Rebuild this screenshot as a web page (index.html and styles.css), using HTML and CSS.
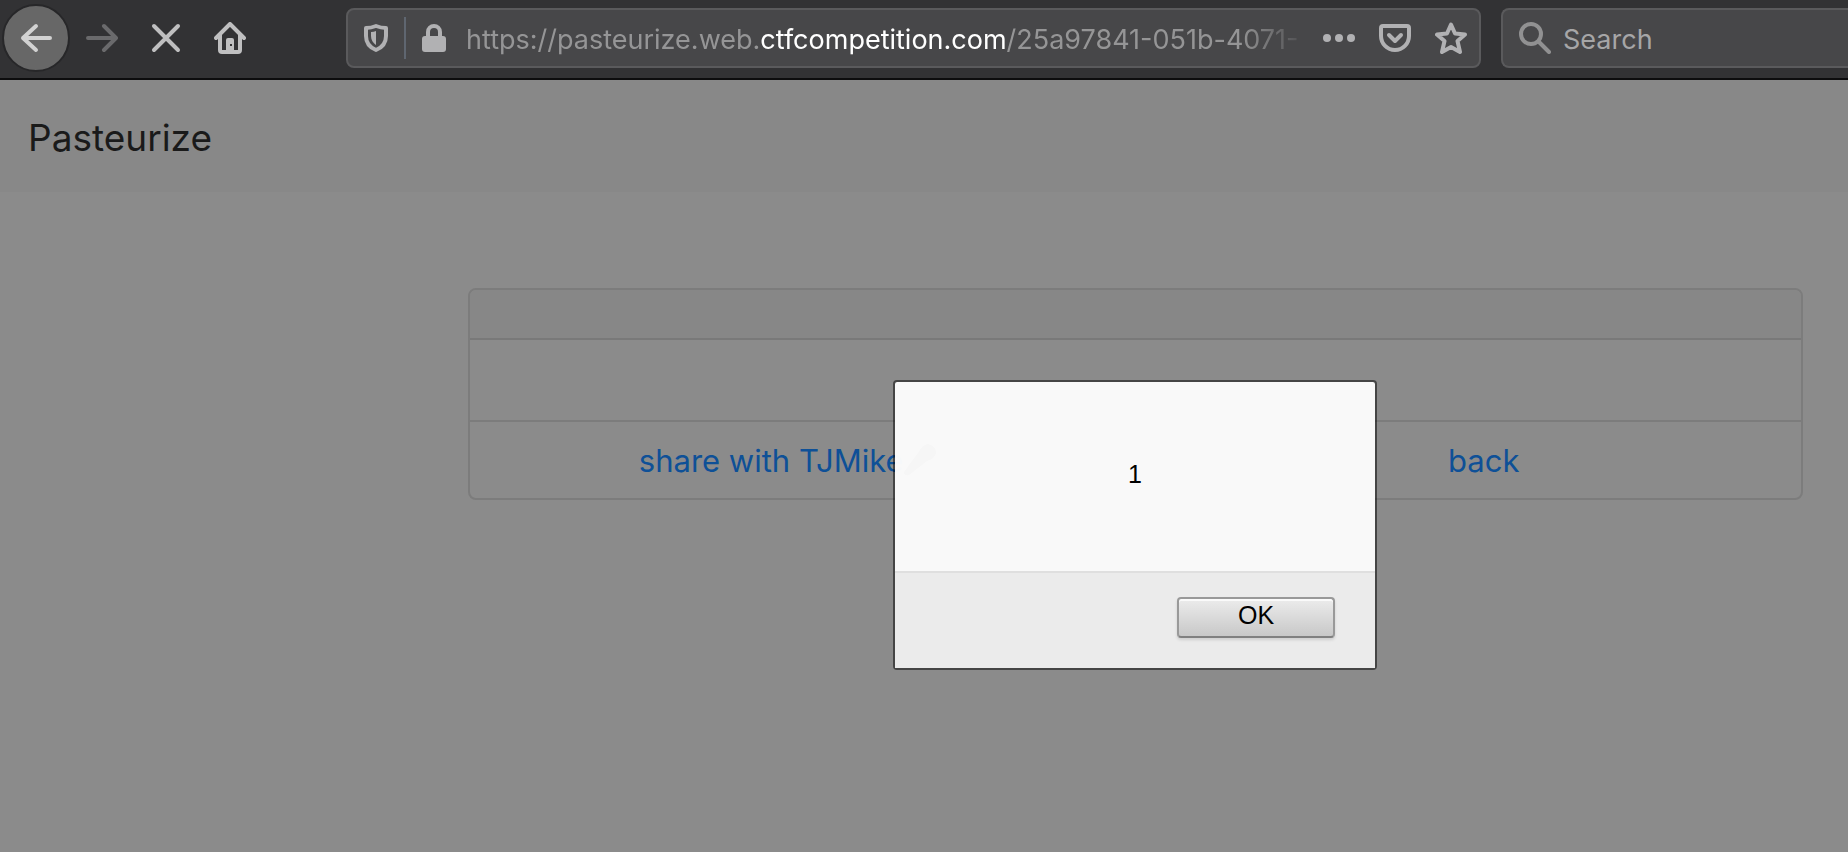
FILE: index.html
```html
<!DOCTYPE html>
<html lang="en">
<head>
<meta charset="utf-8">
<title>Pasteurize</title>
<link rel="stylesheet" href="styles.css">
</head>
<body>
<header class="toolbar">
  <div class="nav-buttons">
    <button class="nav-button nav-back" aria-label="Back"><svg class="icon" viewBox="0 0 32 32"><path d="M30 16H3M16 4L3 16l13 12"/></svg></button>
    <button class="nav-button nav-forward" aria-label="Forward"><svg class="icon" viewBox="0 0 32 32"><path d="M2 16h27M18 4l12 12-12 12"/></svg></button>
    <button class="nav-button" aria-label="Stop"><svg class="icon" viewBox="0 0 32 32"><path d="M4 4l24 24M28 4L4 28"/></svg></button>
    <button class="nav-button" aria-label="Home"><svg class="icon" viewBox="0 0 32 32"><path d="M2 16L16 2l14 14M6 13v15q0 2 2 2h16q2 0 2-2V13"/><path class="solid" fill-rule="evenodd" d="M12 29V18q0-2 2-2h4q2 0 2 2v11zM16 22v2h2v-2z"/></svg></button>
  </div>
  <div class="urlbar">
    <button class="field-button" aria-label="Tracking protection"><svg class="icon" viewBox="0 0 32 32"><path d="M16 4q-5 2-10 2v8c0 8 5 12 10 14 5-2 10-6 10-14V6q-5 0-10-2z"/><path class="solid" d="M16 9v14c-3-2-5-5-5-9v-4q3 0 5-1z"/></svg></button>
    <span class="separator"></span>
    <button class="field-button" aria-label="Connection security"><svg class="icon" viewBox="0 0 32 32"><rect class="solid" x="4" y="14" width="24" height="16" rx="3"/><path d="M10 16v-6a6 6 0 0 1 12 0v6"/></svg></button>
    <div class="address" role="textbox" contenteditable="true" spellcheck="false" aria-label="Address">https://pasteurize.web.<span class="domain">ctfcompetition.com</span>/25a97841-051b-4071-</div>
    <div class="page-actions">
      <button class="field-button" aria-label="Page actions"><svg class="icon" viewBox="0 0 32 32"><g class="solid"><circle cx="4" cy="16" r="4"/><circle cx="16" cy="16" r="4"/><circle cx="28" cy="16" r="4"/></g></svg></button>
      <button class="field-button" aria-label="Save to Pocket"><svg class="icon" viewBox="0 0 32 32"><path d="M4 4h24q2 0 2 2v8a14 14 0 0 1-28 0V6q0-2 2-2zM10 13l6 6 6-6"/></svg></button>
      <button class="field-button" aria-label="Bookmark this page"><svg class="icon" viewBox="0 0 32 32"><path d="M16 2.500l4 9 10 1-7.500 6.500 2.500 11-9-5-9 5 2.500-11L2 12.500l10-1z"/></svg></button>
    </div>
  </div>
  <label class="search">
    <svg class="icon" viewBox="0 0 32 32"><circle cx="12" cy="12" r="10"/><path d="M20 20l10 10"/></svg>
    <input class="search-input" type="text" placeholder="Search" aria-label="Search">
  </label>
</header>
<nav class="navbar"><a class="brand" href="#">Pasteurize</a></nav>
<main class="page">
  <section class="note">
    <div class="note-title"></div>
    <div class="note-body"></div>
    <div class="note-actions">
      <div class="action"><a class="link" href="#">share with TJMike<svg class="mic" viewBox="0 0 32 32" aria-hidden="true"><path d="M0 28L14 9Q18 1 24 0q8 2 8 9-1 5-9 8L5 31q-5 1-5-3z"/></svg></a></div>
      <div class="action action-back"><a class="link" href="#">back</a></div>
    </div>
  </section>
  <dialog class="alert" open aria-labelledby="alert-message">
    <p class="alert-message" id="alert-message">1</p>
    <div class="alert-footer"><button class="alert-ok">OK</button></div>
  </dialog>
</main>
</body>
</html>
```
FILE: styles.css
```css
* { box-sizing: border-box; }

body {
  margin: 0;
  min-height: 100vh;
  background: #8b8b8b;
  font-family: Inter, "Liberation Sans", sans-serif;
}

button {
  padding: 0;
  border: 0;
  background: none;
  color: inherit;
  font: inherit;
}

a { text-decoration: none; }

.icon {
  display: block;
  flex: none;
  width: 32px;
  height: 32px;
  fill: none;
  stroke: currentColor;
  stroke-width: 4;
  stroke-linecap: round;
  stroke-linejoin: round;
}

.icon .solid { fill: currentColor; stroke: none; }

/* Browser toolbar */
.toolbar {
  display: flex;
  align-items: center;
  height: 80px;
  padding: 0 0 2px 2px;
  border-bottom: 2px solid #0c0c0d;
  background: #323234;
  color: #bfbfc0;
}

.nav-buttons {
  display: flex;
  align-items: center;
  flex: none;
  width: 344px;
}

.nav-button {
  display: grid;
  place-items: center;
  width: 64px;
  height: 68px;
}

.nav-back {
  width: 68px;
  border: 2px solid #272729;
  border-radius: 50%;
  background: #676767;
  color: #d2d2d2;
}

.nav-forward { color: #6a6a6c; }

.urlbar,
.search {
  display: flex;
  align-items: center;
  min-width: 0;
  height: 60px;
  border: 2px solid #5a5a5c;
  border-radius: 8px;
  background: #474749;
  font-size: 27px;
}

.urlbar {
  flex: 1;
  margin-right: 20px;
  padding: 0 12px;
  color: #b1b1b3;
}

.separator {
  flex: none;
  width: 2px;
  height: 42px;
  margin: 0 12px;
  background: #5f6670;
}

.address {
  flex: 1;
  min-width: 0;
  margin: 0 12px 0 16px;
  padding-top: 3px;
  overflow: hidden;
  color: #959596;
  line-height: 40px;
  white-space: nowrap;
  outline: 0;
  mask-image: linear-gradient(to left, transparent, #000 72px);
}

.domain { color: #fff; }

.page-actions { display: flex; gap: 24px; }

.search {
  flex: 0 0 347px;
  padding-left: 16px;
  gap: 12px;
  border-right: 0;
  border-radius: 8px 0 0 8px;
  color: #919192;
}

.search-input {
  flex: 1;
  min-width: 0;
  padding: 3px 0 0;
  border: 0;
  outline: 0;
  background: none;
  color: #fff;
  font: inherit;
}

.search-input::placeholder { color: #a6a6a7; opacity: 1; }

/* Page */
.navbar {
  display: flex;
  align-items: center;
  height: 112px;
  padding: 3px 28px 0;
  background: #888;
}

.brand { color: #1a1a1a; font-size: 37px; }

.page {
  position: relative;
  margin: 96px 45px 0 468px;
}

.note {
  border: 2px solid #7c7c7c;
  border-radius: 8px;
}

.note-title {
  height: 50px;
  border-bottom: 2px solid #797979;
  border-radius: 6px 6px 0 0;
  background: #878787;
}

.note-body { height: 80px; }

.note-actions {
  display: flex;
  padding: 12px 0;
  border-top: 2px solid #7c7c7c;
}

.action {
  display: flex;
  align-items: center;
  justify-content: center;
  flex: 1;
  height: 52px;
}

.action:first-child { margin-left: -30px; }

.action-back { margin-right: -30px; border-left: 2px solid #7c7c7c; }

.link {
  display: flex;
  align-items: center;
  color: #0e5097;
  font-size: 31px;
}

.mic { width: 32px; height: 32px; fill: #000; }

/* Alert */
.alert {
  position: absolute;
  top: 92px;
  right: 1px;
  left: 0;
  width: 484px;
  margin: 0 auto;
  padding: 0;
  border: 2px solid rgba(0, 0, 0, 0.5);
  border-radius: 4px;
  background: rgba(252, 252, 252, 0.975);
  background-clip: padding-box;
  color: #000;
  font-family: "Liberation Sans", Arial, sans-serif;
  font-size: 25px;
}

.alert-message {
  margin: 0;
  padding-bottom: 4px;
  line-height: 185px;
  text-align: center;
}

.alert-footer {
  display: flex;
  justify-content: flex-end;
  padding: 24px 40px 30px;
  border-top: 2px solid #dfdfdf;
  background: #ebebeb;
}

.alert-ok {
  width: 158px;
  height: 41px;
  padding-bottom: 4px;
  border: 2px solid #999;
  border-bottom-color: #808080;
  border-radius: 4px;
  background: linear-gradient(#ececec, #c8c8c8);
  box-shadow: 0 2px 3px rgba(0, 0, 0, 0.12), inset 0 2px 0 #fafafa;
}
```
